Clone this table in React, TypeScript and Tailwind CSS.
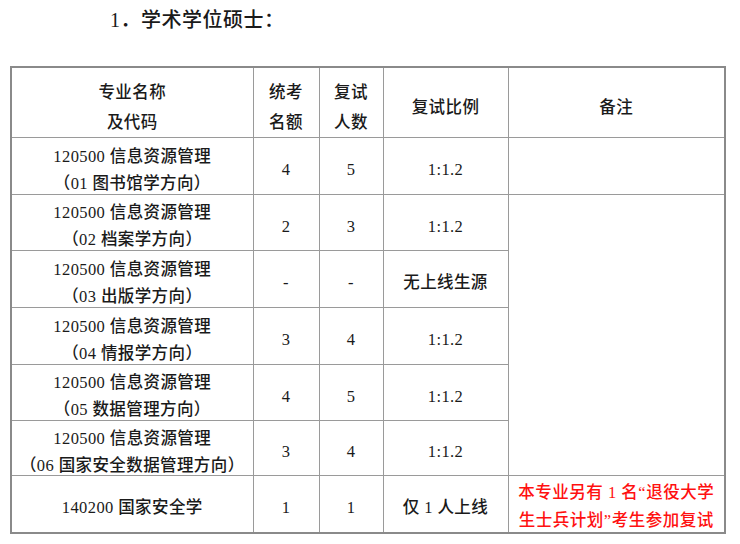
import React from 'react';

interface Row {
  name: string[];
  quota: string;
  retest: string;
  ratio: string;
  h: string;
}

const rows: Row[] = [
  { name: ['120500 信息资源管理', '（01 图书馆学方向）'], quota: '4', retest: '5', ratio: '1:1.2', h: 'h-[57px]' },
  { name: ['120500 信息资源管理', '（02 档案学方向）'], quota: '2', retest: '3', ratio: '1:1.2', h: 'h-[56px]' },
  { name: ['120500 信息资源管理', '（03 出版学方向）'], quota: '-', retest: '-', ratio: '无上线生源', h: 'h-[57px]' },
  { name: ['120500 信息资源管理', '（04 情报学方向）'], quota: '3', retest: '4', ratio: '1:1.2', h: 'h-[57px]' },
  { name: ['120500 信息资源管理', '（05 数据管理方向）'], quota: '4', retest: '5', ratio: '1:1.2', h: 'h-[56px]' },
  { name: ['120500 信息资源管理', '（06 国家安全数据管理方向）'], quota: '3', retest: '4', ratio: '1:1.2', h: 'h-[53px]' },
];

const cell = 'border border-[#9a9a9a] text-center align-middle p-0';

// 内容整体略微下移，和原图的基线对齐
function C({ children, dy = 'translate-y-[4px]' }: { children?: React.ReactNode; dy?: string }) {
  return <div className={dy}>{children}</div>;
}

export default function App() {
  return (
    <div
      className="w-[740px] h-[544px] bg-white text-[#1a1a1a] overflow-hidden"
      style={{ fontFamily: '"Liberation Serif", "Noto Sans CJK SC", serif' }}
    >
      <div className="pl-[110px] pt-[7px] h-[66px] text-[20px] leading-[26px] tracking-[0.5px] font-medium">
        1．学术学位硕士：
      </div>
      <div className="pl-[10px]">
        <table className="table-fixed border-collapse border-2 border-[#8a8a8a] w-[714px] text-[16.5px] leading-[27px] tracking-[0.4px] font-medium">
          <colgroup>
            <col className="w-[242px]" />
            <col className="w-[66px]" />
            <col className="w-[64px]" />
            <col className="w-[125px]" />
            <col className="w-[217px]" />
          </colgroup>
          <thead>
            <tr className="h-[70px] leading-[30px]">
              <th className={`${cell} font-medium`}>
                <C dy="translate-y-[6px]">
                  <div>专业名称</div>
                  <div>及代码</div>
                </C>
              </th>
              <th className={`${cell} font-medium`}>
                <C dy="translate-y-[6px]">
                  <div>统考</div>
                  <div>名额</div>
                </C>
              </th>
              <th className={`${cell} font-medium`}>
                <C dy="translate-y-[6px]">
                  <div>复试</div>
                  <div>人数</div>
                </C>
              </th>
              <th className={`${cell} font-medium`}>
                <C dy="translate-y-[6px]">复试比例</C>
              </th>
              <th className={`${cell} font-medium`}>
                <C dy="translate-y-[6px]">备注</C>
              </th>
            </tr>
          </thead>
          <tbody>
            {rows.map((r, i) => (
              <tr key={i} className={r.h}>
                <td className={cell}>
                  <C>
                    {r.name.map((l, j) => (
                      <div key={j} className="whitespace-nowrap">{l}</div>
                    ))}
                  </C>
                </td>
                <td className={cell}><C>{r.quota}</C></td>
                <td className={cell}><C>{r.retest}</C></td>
                <td className={cell}><C>{r.ratio}</C></td>
                {i === 0 && <td className={cell}></td>}
                {i === 1 && <td className={cell} rowSpan={5}></td>}
              </tr>
            ))}
            <tr className="h-[58px]">
              <td className={cell}><C>140200 国家安全学</C></td>
              <td className={cell}><C>1</C></td>
              <td className={cell}><C>1</C></td>
              <td className={cell}><C>仅 1 人上线</C></td>
              <td className={`${cell} text-[#ff1010] leading-[28px] tracking-[0.5px]`}>
                <C dy="translate-y-[3px]">
                  <div className="whitespace-nowrap">本专业另有 1 名“退役大学</div>
                  <div className="whitespace-nowrap">生士兵计划”考生参加复试</div>
                </C>
              </td>
            </tr>
          </tbody>
        </table>
      </div>
    </div>
  );
}
